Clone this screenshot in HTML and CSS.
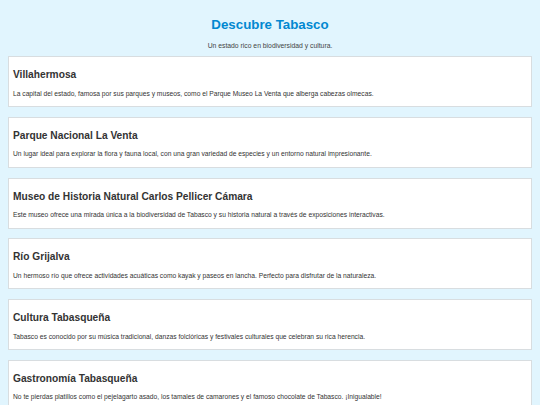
FILE: index.html
```html
<!DOCTYPE html>
<html lang="es">
<head>
<meta charset="utf-8">
<title>Descubre Tabasco</title>
<link rel="stylesheet" href="styles.css">
</head>
<body>
<header class="hero">
  <h1 class="hero-title">Descubre Tabasco</h1>
  <p class="hero-sub">Un estado rico en biodiversidad y cultura.</p>
</header>
<main class="list">
  <section class="card">
    <h2 class="card-title">Villahermosa</h2>
    <p class="card-text">La capital del estado, famosa por sus parques y museos, como el Parque Museo La Venta que alberga cabezas olmecas.</p>
  </section>
  <section class="card">
    <h2 class="card-title">Parque Nacional La Venta</h2>
    <p class="card-text">Un lugar ideal para explorar la flora y fauna local, con una gran variedad de especies y un entorno natural impresionante.</p>
  </section>
  <section class="card">
    <h2 class="card-title">Museo de Historia Natural Carlos Pellicer Cámara</h2>
    <p class="card-text">Este museo ofrece una mirada única a la biodiversidad de Tabasco y su historia natural a través de exposiciones interactivas.</p>
  </section>
  <section class="card">
    <h2 class="card-title">Río Grijalva</h2>
    <p class="card-text">Un hermoso río que ofrece actividades acuáticas como kayak y paseos en lancha. Perfecto para disfrutar de la naturaleza.</p>
  </section>
  <section class="card">
    <h2 class="card-title">Cultura Tabasqueña</h2>
    <p class="card-text">Tabasco es conocido por su música tradicional, danzas folclóricas y festivales culturales que celebran su rica herencia.</p>
  </section>
  <section class="card">
    <h2 class="card-title">Gastronomía Tabasqueña</h2>
    <p class="card-text">No te pierdas platillos como el pejelagarto asado, los tamales de camarones y el famoso chocolate de Tabasco. ¡Inigualable!</p>
  </section>
</main>
</body>
</html>
```
FILE: styles.css
```css
html, body {
  margin: 0;
  padding: 0;
}
body {
  background: #e1f5fe;
  font-family: "Liberation Sans", Arial, sans-serif;
  color: #333;
  padding: 0 8px 20px;
}
.hero {
  text-align: center;
  padding-top: 15.5px;
}
.hero-title {
  margin: 0;
  font-size: 13.3px;
  line-height: 18px;
  color: #0288d1;
  font-weight: bold;
}
.hero-sub {
  margin: 8px 0 0;
  font-size: 6.8px;
  line-height: 8px;
  color: #444;
}
.list {
  display: flex;
  flex-direction: column;
  gap: 9.8px;
  margin-top: 6.5px;
}
.card {
  background: #fff;
  border: 1px solid #d8dde0;
  padding: 11px 4px 9.5px;
  height: 51px;
  box-sizing: border-box;
}
.card-title {
  margin: 0;
  font-size: 10.2px;
  line-height: 13px;
  font-weight: bold;
  color: #333;
}
.card-text {
  margin: 8.5px 0 0;
  font-size: 6.7px;
  line-height: 8px;
  color: #333;
}
```
